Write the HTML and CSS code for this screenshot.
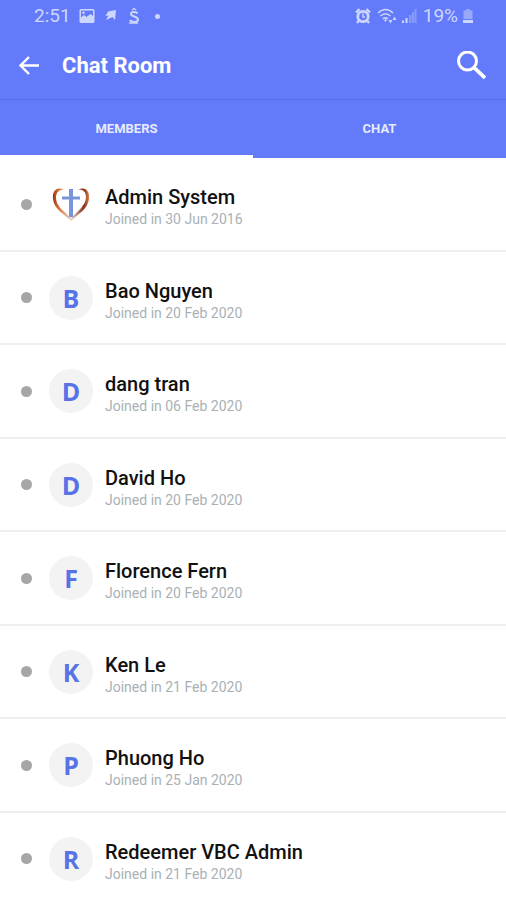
FILE: index.html
```html
<!DOCTYPE html>
<html lang="en">
<head>
<meta charset="utf-8">
<meta name="viewport" content="width=device-width, initial-scale=1">
<title>Chat Room</title>
<link rel="stylesheet" href="styles.css">
</head>
<body>
<header class="top">
  <div class="status">
    <div class="status-left">
      <span>2:51</span>
      <svg class="i-picture" width="16" height="16" viewBox="0 0 16 16" aria-hidden="true"><path fill="currentColor" fill-rule="evenodd" d="M2 1h12q1.500 0 1.500 1.500v11q0 1.500-1.500 1.500H2Q.5 15 .5 13.500v-11Q.5 1 2 1zm0 1.500v7l3-2.500 2.500 2 4-3 2.500 2V2.500zM4.500 3.500a1.300 1.300 0 1 1 0 2.600 1.300 1.300 0 0 1 0-2.600z"/></svg>
      <svg class="i-flag" width="12" height="14" viewBox="0 0 12 14" aria-hidden="true"><path fill="currentColor" d="M3 2.500 11 1 10 11 7.500 8 1 11 3.500 6.500.5 7z"/></svg>
      <svg class="i-s" width="12" height="18" viewBox="0 0 12 18" fill="none" stroke="currentColor" aria-hidden="true"><path stroke-width="2" d="M9.500 6.500C8.500 4.500 3 4 3 7c0 3 7 2 7 5.500 0 3-6.500 3.500-8 .5"/><path stroke-width="1.300" d="M4 3 6 1.500 8 3M1 16h9"/></svg>
      <span class="status-dot"></span>
    </div>
    <div class="status-right">
      <svg width="16" height="16" viewBox="0 0 16 16" fill="none" stroke="currentColor" aria-hidden="true"><circle cx="8" cy="8.500" r="5.200" stroke-width="2.800"/><path stroke-width="2.400" d="M1 4.500 4.500 1M15 4.500 11.500 1M3.500 13 2 15M12.500 13l1.500 2"/><path stroke-width="1.500" d="M8 5.500V9h2"/></svg>
      <svg class="i-wifi" width="20" height="16" viewBox="0 0 20 16" fill="none" stroke="currentColor" aria-hidden="true"><path stroke-width="1.500" d="M1 5Q8.500 -2 16 5M3.500 8q5-4.600 10 0M6 11q2.500-2.500 5 0"/><path fill="currentColor" stroke="none" d="m7 12 1.500-1 1.500 1-1.500 2zM11.500 12h4l-2 3.500zM15.500 12l2-3.500 2 3.500z"/></svg>
      <svg width="16" height="16" viewBox="0 0 16 16" fill="currentColor" aria-hidden="true"><path d="M1 12.500h2V15H1zM4.500 10h2v5h-2z"/><path opacity=".35" d="M8 7h2.500v8H8zM11 4h2v11h-2zM13.500 1h2v14h-2z"/></svg>
      <span class="percent">19%</span>
      <svg class="i-battery" width="12" height="16" viewBox="0 0 12 16" fill="currentColor" aria-hidden="true"><path opacity=".5" d="M4 1h4v1.500h2.500V11h-9V2.500H4z"/><path d="M1 12h10v3H1z"/></svg>
    </div>
  </div>
  <div class="bar">
    <button class="icon-button" aria-label="Back"><svg width="20" height="20" viewBox="0 0 20 20" fill="none" stroke="currentColor" stroke-width="2.400" aria-hidden="true"><path d="M20 9.500H2M10 1 1.500 9.500l8.500 8.500"/></svg></button>
    <h1>Chat Room</h1>
    <button class="icon-button search" aria-label="Search"><svg width="30" height="30" viewBox="0 0 30 30" fill="none" stroke="currentColor" aria-hidden="true"><circle cx="11.500" cy="10" r="9" stroke-width="3"/><path stroke-width="3.800" d="m18 16.500 11 10.500"/></svg></button>
  </div>
</header>
<nav class="tabs">
  <button class="tab active">MEMBERS</button>
  <button class="tab">CHAT</button>
</nav>
<main>
  <ul class="members">
    <li class="member"><span class="presence"></span>
      <svg class="logo" width="44" height="44" viewBox="0 0 44 44" fill="none" aria-hidden="true">
        <defs><linearGradient id="rim" x1="0" y1="0" x2="1" y2="0"><stop offset="0" stop-color="#963216"/><stop offset=".15" stop-color="#d66f32"/><stop offset=".5" stop-color="#e8d8cc"/><stop offset=".86" stop-color="#873015"/><stop offset="1" stop-color="#d7834c"/></linearGradient></defs>
        <path fill="url(#rim)" d="M15 8C8 4 3 9 4 17c1 10 11 15 18 22 7-7 17-12 18-22 1-8-4-13-11-9 5-1 8 2 8 7 0 8-8 14-15 21C15 29 7 24 7 16c0-5 3-9 8-8z"/>
        <path stroke="#7895dc" stroke-width="4" d="M22 7v28"/><path stroke="#7895dc" stroke-width="3" d="M13 16h18"/>
      </svg>
      <div class="details"><h2>Admin System</h2><p>Joined in 30 Jun 2016</p></div></li>
    <li class="member"><span class="presence"></span><span class="avatar">B</span><div class="details"><h2>Bao Nguyen</h2><p>Joined in 20 Feb 2020</p></div></li>
    <li class="member"><span class="presence"></span><span class="avatar">D</span><div class="details"><h2>dang tran</h2><p>Joined in 06 Feb 2020</p></div></li>
    <li class="member"><span class="presence"></span><span class="avatar">D</span><div class="details"><h2>David Ho</h2><p>Joined in 20 Feb 2020</p></div></li>
    <li class="member"><span class="presence"></span><span class="avatar">F</span><div class="details"><h2>Florence Fern</h2><p>Joined in 20 Feb 2020</p></div></li>
    <li class="member"><span class="presence"></span><span class="avatar">K</span><div class="details"><h2>Ken Le</h2><p>Joined in 21 Feb 2020</p></div></li>
    <li class="member"><span class="presence"></span><span class="avatar">P</span><div class="details"><h2>Phuong Ho</h2><p>Joined in 25 Jan 2020</p></div></li>
    <li class="member"><span class="presence"></span><span class="avatar">R</span><div class="details"><h2>Redeemer VBC Admin</h2><p>Joined in 21 Feb 2020</p></div></li>
  </ul>
</main>
</body>
</html>
```
FILE: styles.css
```css
* { box-sizing: border-box; }
html { scrollbar-width: none; }
body { margin: 0; background: #fff; font-family: Roboto, sans-serif; }
h1, h2, p, ul { margin: 0; padding: 0; }
button { border: 0; padding: 0; background: none; color: inherit; font: inherit; }
svg { display: block; flex: none; }

.top { background: #637bfa; color: #fff; border-bottom: 1px solid #586fe8; }
.status {
  display: flex;
  align-items: center;
  justify-content: space-between;
  height: 32px;
  padding: 0 32px 0 34px;
  color: #cdd6fc;
  font-size: 19px;
  line-height: 32px;
}
.status-left, .status-right { display: flex; align-items: center; }
.i-picture { margin-left: 8px; }
.i-flag { margin-left: 10px; }
.i-s { margin-left: 11px; }
.status-dot { width: 5px; height: 5px; margin-left: 15px; border-radius: 50%; background: currentColor; }
.i-wifi { margin-left: 6px; }
.status-right svg + svg + svg { margin-left: 4px; }
.percent { margin-left: 6px; }
.i-battery { margin-left: 4px; }

.bar { display: flex; align-items: center; height: 67px; padding: 0 20px 0 19px; }
.icon-button { display: flex; }
.bar h1 { margin-left: 23px; font-size: 22px; line-height: 28px; font-weight: 700; }
.search { margin-left: auto; }

.tabs { display: flex; background: #637bfa; color: #e6ebff; }
.tab {
  flex: 1;
  height: 58px;
  padding-top: 2px;
  border-bottom: 3px solid #637bfa;
  font-size: 13px;
  font-weight: 700;
}
.tab.active { border-color: #fff; }

.members { list-style: none; }
.member {
  display: flex;
  align-items: center;
  height: 94px;
  padding-left: 21px;
  border-bottom: 2px solid #efefef;
}
.member:nth-child(even) { height: 93px; }
.member:last-child { border-color: transparent; }
.presence { width: 11px; height: 11px; border-radius: 50%; background: #a6a6a6; }
.avatar, .logo { width: 44px; height: 44px; margin: 0 12px 0 17px; }
.avatar {
  border-radius: 50%;
  background: #f3f3f3;
  color: #5873e8;
  font-family: "Open Sans", sans-serif;
  font-size: 25px;
  font-weight: 700;
  line-height: 44px;
  text-align: center;
}
.details { padding-top: 6px; }
.member h2 { color: #111; font-size: 20px; font-weight: 500; line-height: 24px; }
.member p { color: #a9b1b5; font-size: 14px; line-height: 20px; }
```
